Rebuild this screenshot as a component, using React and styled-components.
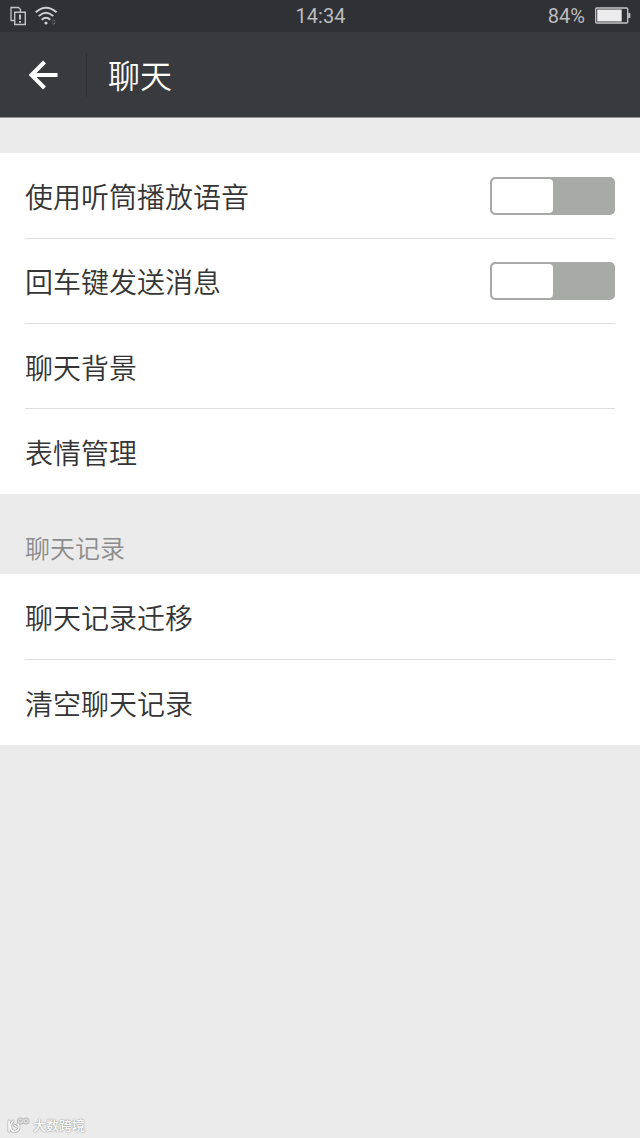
import React from "react";
import styled, { createGlobalStyle } from "styled-components";

const GlobalStyle = createGlobalStyle`
    * {
        box-sizing: border-box;
    }
    body {
        margin: 0;
        background-color: #ebebeb;
        font-family: "Noto Sans CJK SC", "Noto Sans", sans-serif;
        font-weight: 350;
        color: #353535;
    }
`;

const Page = styled.div`
    display: flex;
    flex-direction: column;
    min-height: 100vh;
`;

const StatusBar = styled.div`
    display: grid;
    grid-template-columns: 1fr auto 1fr;
    align-items: center;
    height: 32px;
    padding: 0 9px 0 10px;
    background-color: #303135;
    color: #bcbcbe;
    font-family: Roboto, sans-serif;
    font-size: 20px;
    font-weight: 400;
    line-height: 32px;
`;

const StatusGroup = styled.div`
    display: flex;
    align-items: center;
    justify-content: ${props => props.$end ? "flex-end" : "flex-start"};
    gap: ${props => props.$end ? "10px" : "8px"};
    svg {
        display: block;
    }
`;

const Header = styled.header`
    display: flex;
    align-items: center;
    height: 86px;
    background-color: #393a3e;
    border-bottom: 1px solid #8f8f92;
    color: white;
`;

const BackButton = styled.button`
    display: flex;
    align-items: center;
    justify-content: center;
    width: 87px;
    height: 44px;
    padding: 0;
    border: 0;
    border-right: 1px solid #2e2f33;
    background: none;
    color: inherit;
`;

const Title = styled.h1`
    margin: 0;
    padding: 0 0 2px 21px;
    font-size: 32px;
    font-weight: inherit;
    line-height: 44px;
`;

const Content = styled.main`
    flex: 1;
    padding-top: 35px;
`;

const SectionTitle = styled.h2`
    margin: 0;
    padding: 35px 25px 9px;
    color: #8c8c8c;
    font-size: 25px;
    font-weight: inherit;
    line-height: 36px;
`;

const List = styled.ul`
    margin: 0;
    padding: 0 25px 1px;
    list-style: none;
    background-color: white;
`;

const Item = styled.li`
    display: flex;
    height: 85px;
    & + & {
        border-top: 1px solid #dedede;
    }
`;

const SwitchRow = styled.label`
    display: flex;
    flex: 1;
    align-items: center;
    justify-content: space-between;
    font-size: 28px;
    line-height: 40px;
`;

const LinkRow = styled.button`
    flex: 1;
    padding: 1px 0 0;
    border: 0;
    background: none;
    color: inherit;
    font-family: inherit;
    font-size: 28px;
    font-weight: inherit;
    line-height: 40px;
    text-align: left;
`;

const Switch = styled.input`
    appearance: none;
    display: flex;
    width: 125px;
    height: 38px;
    margin: 0;
    padding: 0;
    border: 2px solid #a8aaa8;
    border-radius: 5px;
    background-color: #a8aaa8;
    &::before {
        content: "";
        width: 61px;
        border-radius: 4px;
        background-color: white;
    }
    &:checked {
        justify-content: flex-end;
        border-color: #45c01a;
        background-color: #45c01a;
    }
`;

const Watermark = styled.footer`
    display: flex;
    align-items: center;
    gap: 3px;
    padding: 0 7px 3px;
    color: white;
    font-size: 13px;
    font-weight: 500;
    line-height: 20px;
    text-shadow: 0 0 1px #909090, 0 0 2px #a0a0a0;
`;

const SimIcon = () => (
    <svg width="17" height="20" viewBox="0 0 17 20" fill="none" stroke="#c4c4c6">
        <path d="M4 14.5H1V1.5h7.5l2 2V6" strokeWidth="1.3" />
        <path d="M4.7 6.2h10.6v12.3H4.7z" strokeWidth="1.4" />
        <path d="M10 8.6v5M10 15v1.8" strokeWidth="2" />
    </svg>
);

const WifiIcon = () => (
    <svg width="23" height="20" viewBox="0 0 23 20" fill="none" stroke="#d0d0d2" strokeWidth="1.9">
        <path d="M.7 6.3Q11 -2.8 21.6 6.3" />
        <path d="M3.7 10.1Q11 3.6 18.3 10.1" />
        <path d="M6.7 13.8Q11 9.8 15.3 13.8" />
        <circle cx="11" cy="17" r="1.6" fill="#d0d0d2" stroke="none" />
        <path d="M17.3 15.4l1.5-1.4 1.5 1.4M17.3 16.8l1.5 1.4 1.5-1.4" stroke="#77777a" strokeWidth="1" />
    </svg>
);

const BatteryIcon = () => (
    <svg width="36" height="18" viewBox="0 0 36 18">
        <rect x=".7" y="1" width="32" height="15" rx="1" fill="none" stroke="#c6c6c8" strokeWidth="1.3" />
        <rect x="2.2" y="2.5" width="24.5" height="12" fill="#ececec" />
        <path d="M34.3 6v5" stroke="#c6c6c8" strokeWidth="2" />
    </svg>
);

const BackIcon = () => (
    <svg width="30" height="30" viewBox="0 0 30 30" fill="none" stroke="currentColor" strokeWidth="4">
        <path d="M29.500 15H4M16.500 2L3.500 15l13 13" />
    </svg>
);

const logoPath = "M2 4v10M6 4C2 8 3 15 8 14.5C12 14 13 10 11 7M7 8l3 2";

const WatermarkLogo = () => (
    <svg width="23" height="17" viewBox="0 0 23 17" fill="none" strokeLinecap="round">
        <g stroke="#b4b4b4" strokeWidth="3">
            <path d={logoPath} />
            <circle cx="13.5" cy="4" r="2" />
            <circle cx="19" cy="4" r="2" />
        </g>
        <g stroke="white" strokeWidth="1.5">
            <path d={logoPath} />
            <circle cx="13.5" cy="4" r="2" stroke="#dcdcdc" />
            <circle cx="19" cy="4" r="2" stroke="#dcdcdc" />
        </g>
    </svg>
);

const switches = ["使用听筒播放语音", "回车键发送消息"];
const links = ["聊天背景", "表情管理"];
const records = ["聊天记录迁移", "清空聊天记录"];

const App = () => {
    return (
        <Page>
            <GlobalStyle />
            <StatusBar>
                <StatusGroup>
                    <SimIcon />
                    <WifiIcon />
                </StatusGroup>
                <span>14:34</span>
                <StatusGroup $end>
                    <span>84%</span>
                    <BatteryIcon />
                </StatusGroup>
            </StatusBar>
            <Header>
                <BackButton aria-label="返回">
                    <BackIcon />
                </BackButton>
                <Title>聊天</Title>
            </Header>
            <Content>
                <List>
                    {switches.map(text => (
                        <Item key={text}>
                            <SwitchRow>
                                {text}
                                <Switch type="checkbox" />
                            </SwitchRow>
                        </Item>
                    ))}
                    {links.map(text => (
                        <Item key={text}>
                            <LinkRow>{text}</LinkRow>
                        </Item>
                    ))}
                </List>
                <SectionTitle>聊天记录</SectionTitle>
                <List>
                    {records.map(text => (
                        <Item key={text}>
                            <LinkRow>{text}</LinkRow>
                        </Item>
                    ))}
                </List>
            </Content>
            <Watermark>
                <WatermarkLogo />
                <span>大数跨境</span>
            </Watermark>
        </Page>
    );
};

export default App;
